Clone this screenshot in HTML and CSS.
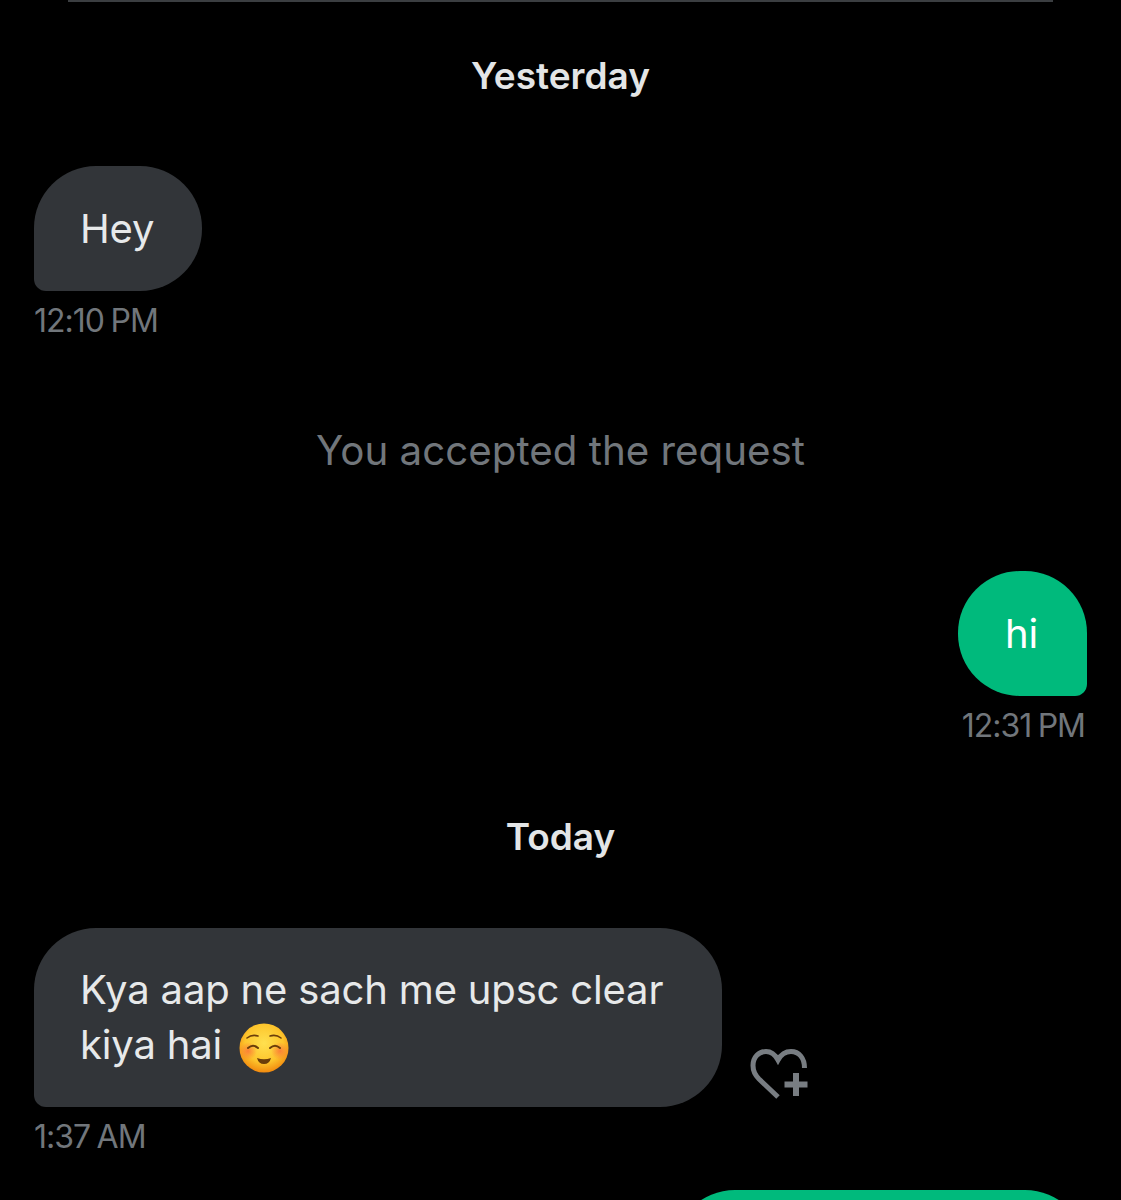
FILE: index.html
```html
<!DOCTYPE html>
<html lang="en">
<head>
    <meta charset="UTF-8">
    <meta name="viewport" content="width=device-width, initial-scale=1.0">
    <title>Messages</title>
    <link rel="stylesheet" href="styles.css">
</head>
<body>

    <div class="top-rule"></div>

    <main class="thread">
        <h2 class="day day-first">Yesterday</h2>

        <!-- Incoming -->
        <div class="msg msg-in msg-hey">
            <div class="bubble bubble-in bubble-short">Hey</div>
            <span class="time">12:10 PM</span>
        </div>

        <p class="notice">You accepted the request</p>

        <!-- Outgoing -->
        <div class="msg msg-out msg-hi">
            <div class="bubble bubble-out bubble-short">hi</div>
            <span class="time">12:31 PM</span>
        </div>

        <h2 class="day day-today">Today</h2>

        <div class="msg msg-in msg-long">
            <div class="bubble-row">
                <div class="bubble bubble-in bubble-text">
                    Kya aap ne sach me upsc clear<br>
                    kiya hai
                    <svg class="emoji" viewBox="0 0 50 50" role="img" aria-label="smiling face">
                        <defs>
                            <radialGradient id="face" cx="50%" cy="40%" r="60%">
                                <stop offset="0%" stop-color="#ffe04f"/>
                                <stop offset="65%" stop-color="#fdc52c"/>
                                <stop offset="100%" stop-color="#f28a0f"/>
                            </radialGradient>
                            <radialGradient id="blush">
                                <stop offset="0%" stop-color="#fb6a3a" stop-opacity="0.75"/>
                                <stop offset="100%" stop-color="#fb6a3a" stop-opacity="0"/>
                            </radialGradient>
                        </defs>
                        <circle cx="25" cy="25" r="24.5" fill="url(#face)"/>
                        <circle cx="9" cy="28" r="9" fill="url(#blush)"/>
                        <circle cx="41" cy="28" r="9" fill="url(#blush)"/>
                        <g fill="none" stroke="#6b3d0a" stroke-linecap="round">
                            <path d="M8 15q5-4 11-2" stroke-width="1.600"/>
                            <path d="M31 13q6-2 11 2" stroke-width="1.600"/>
                            <path d="M9 25q5-4.500 10 0" stroke-width="2"/>
                            <path d="M31 25q5-4.500 10 0" stroke-width="2"/>
                        </g>
                        <path d="M18 35q7 2.500 14 0q-1.500 6-7 6t-7-6z" fill="#6b3d0a"/>
                    </svg>
                </div>
                <button class="react-btn" aria-label="Add reaction">
                    <svg viewBox="0 0 58 52" width="58" height="52" fill="none" stroke="#787d82">
                        <path d="M28 49 9 31C4 26 3 22 3 17.500 3 9 9 3.500 16 3.500 21 3.500 25 6.500 28 12 31 6.500 35 3.500 41 3.500 49 3.500 54.500 10 54.500 20" stroke-width="5"/>
                        <path d="M46 25v23M34.500 36.500h23" stroke-width="6"/>
                    </svg>
                </button>
            </div>
            <span class="time">1:37 AM</span>
        </div>

        <div class="bubble bubble-out bubble-next"></div>
    </main>

</body>
</html>
```

FILE: styles.css
```css
/* General Styles */
* {
    margin: 0;
    padding: 0;
    box-sizing: border-box;
}

html, body {
    height: 1200px;
    overflow: hidden;
}

body {
    background: #000;
    font-family: Inter, 'Liberation Sans', sans-serif;
    color: #e7e9ea;
}

.top-rule {
    height: 2px;
    margin: 0 68px;
    background: #3b3e41;
}

/* the last bubble is cut off by the bottom edge */
.thread {
    display: flex;
    flex-direction: column;
    height: 1198px;
    overflow: hidden;
    padding: 0 34px;
}

/* Day headings */
.day {
    flex: none;
    text-align: center;
    font-size: 37px;
    line-height: 44px;
    font-weight: 600;
    color: #e3e5e6;
}

.day-first {
    margin-top: 52px;
}

.day-today {
    margin-top: 70px;
}

/* Messages */
.msg {
    flex: none;
    display: flex;
    flex-direction: column;
}

.msg-in {
    align-items: flex-start;
}

.msg-out {
    align-items: flex-end;
}

.msg-hey {
    margin-top: 68px;
}

.msg-hi {
    margin-top: 95px;
}

.msg-long {
    margin-top: 69px;
}

.bubble {
    font-size: 40px;
    line-height: 55px;
    letter-spacing: -0.17px;
}

.bubble-short {
    height: 125px;
    padding: 35px 48px 35px 46px;
    border-radius: 62px 62px 62px 12px;
}

.bubble-in {
    background: #323539;
    border-radius: 62px 62px 62px 12px;
}

.bubble-out {
    background: #00ba7c;
    color: #fff;
    padding-left: 47px;
    padding-right: 49px;
    border-radius: 62px 62px 12px 62px;
}

.bubble-text {
    width: 688px;
    height: 179px;
    padding: 34px 46px;
}

.bubble-row {
    display: flex;
    align-items: flex-end;
    gap: 28px;
}

.emoji {
    width: 50px;
    height: 50px;
    margin-left: 6px;
    vertical-align: -14px;
}

.react-btn {
    display: flex;
    margin-bottom: 7px;
    background: none;
    border: none;
}

.time {
    margin-top: 11px;
    font-size: 32px;
    line-height: 38px;
    letter-spacing: -1px;
    word-spacing: -1.5px;
    color: #71767b;
}

.msg-out .time {
    margin-right: 2px;
}

/* System notice */
.notice {
    flex: none;
    margin-top: 86px;
    text-align: center;
    font-size: 40.3px;
    line-height: 50px;
    color: #71767b;
}

.bubble-next {
    flex: none;
    width: 414px;
    height: 125px;
    margin-top: 34px;
    align-self: flex-end;
}
```
